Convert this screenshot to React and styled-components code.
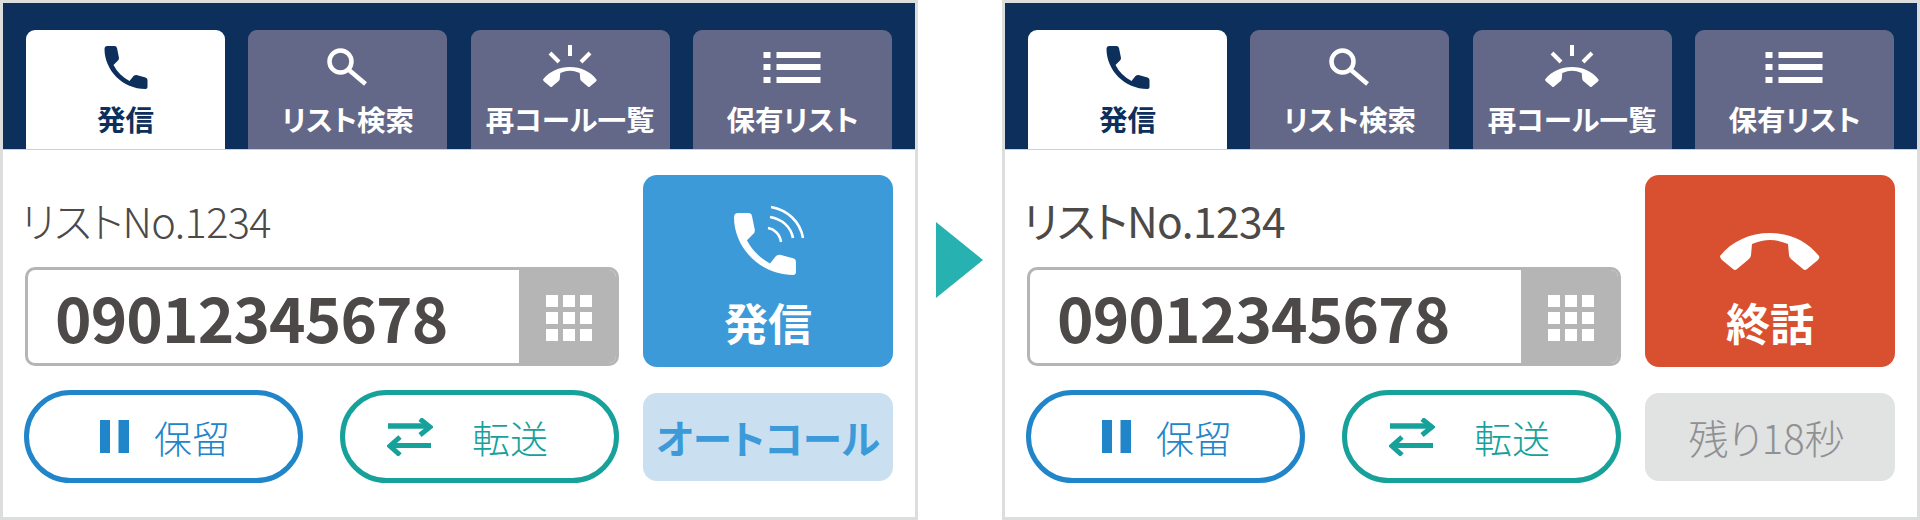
import React from "react";
import styled, { createGlobalStyle } from "styled-components";

const Global = createGlobalStyle`
  html, body { margin: 0; padding: 0; background: #fff; }
  body { font-family: "Noto Sans CJK JP", "Noto Sans", sans-serif; font-feature-settings: "palt"; }
`;

const Page = styled.div`
  width: 1920px;
  height: 520px;
  display: grid;
  grid-template-columns: 918px 84px 918px;
  overflow: hidden;
`;

const Panel = styled.section`
  box-sizing: border-box;
  height: 520px;
  border: 3px solid #dcdddd;
  background: #fff;
`;

const TabBar = styled.nav`
  box-sizing: border-box;
  height: 147px;
  padding: 27px 23px 0;
  display: grid;
  grid-template-columns: repeat(4, 199px);
  column-gap: 23.33px;
  background: #0d2f5c;
  border-bottom: 1px solid #c9d0da;
`;

const Tab = styled.div`
  height: 119px;
  box-sizing: border-box;
  padding-top: 14px;
  border-radius: 9px 9px 0 0;
  display: flex;
  flex-direction: column;
  align-items: center;
  background: ${(p) => (p.$active ? "#fff" : "#646888")};
  color: ${(p) => (p.$active ? "#0d2f5c" : "#fff")};
`;

const TabIcon = styled.svg`
  display: block;
  width: 60px;
  height: 48px;
  fill: currentColor;
  stroke: none;
`;

const TabLabel = styled.span`
  margin-top: 7px;
  font-size: 28.5px;
  line-height: 40px;
  font-weight: 700;
  white-space: nowrap;
`;

const Body = styled.div`
  display: grid;
  grid-template-columns: 595px 250px;
  grid-template-rows: 192px 93px;
  column-gap: 24px;
  row-gap: 23px;
  padding: 25px 0 0 21px;
`;

const Entry = styled.div`
  display: flex;
  flex-direction: column;
  justify-content: flex-end;
  padding-bottom: 1px;
`;

const ListLabel = styled.div`
  margin: 0 0 23px -3px;
  font-size: ${(p) => p.$size}px;
  line-height: 48px;
  font-weight: ${(p) => p.$weight};
  color: #4c4948;
  letter-spacing: -0.6px;
`;

const NumberField = styled.div`
  box-sizing: border-box;
  margin-left: 1px;
  height: 99px;
  display: flex;
  border: 3px solid #b5b5b6;
  border-radius: 10px;
  overflow: hidden;
`;

const NumberText = styled.div`
  flex: 1;
  padding-left: 27px;
  font-size: 62px;
  line-height: 92px;
  font-weight: 700;
  color: #4c4948;
  letter-spacing: -0.9px;
`;

const Keypad = styled.div`
  width: 97px;
  box-sizing: border-box;
  padding: 2px 0 0 3px;
  background: #b5b5b6;
  display: flex;
  align-items: center;
  justify-content: center;
`;

const KeyGrid = styled.div`
  display: grid;
  grid-template-columns: repeat(3, 12px);
  grid-auto-rows: 12px;
  gap: 5px;
`;

const Key = styled.span`
  background: #fff;
`;

const CallButton = styled.div`
  border-radius: 14px;
  background: ${(p) => p.$color};
  color: #fff;
  display: flex;
  flex-direction: column;
  align-items: center;
  padding-top: 27px;
  box-sizing: border-box;
`;

const CallLabel = styled.span`
  font-size: 44px;
  line-height: 60px;
  font-weight: 700;
`;

const CallIcon = styled.svg`
  display: block;
  width: 110px;
  height: 76px;
  fill: currentColor;
  margin-bottom: 14px;
`;

const PillRow = styled.div`
  display: grid;
  grid-template-columns: 279px 279px;
  column-gap: 37px;
`;

const Pill = styled.div`
  box-sizing: border-box;
  height: 93px;
  border: 5px solid ${(p) => p.$color};
  border-radius: 47px;
  color: ${(p) => p.$color};
  display: flex;
  align-items: center;
  padding-left: ${(p) => p.$pad}px;
  gap: ${(p) => p.$gap}px;
`;

const PillText = styled.span`
  font-size: 38px;
  line-height: 48px;
  font-weight: 300;
`;

const PillIcon = styled.svg`
  display: block;
  flex: none;
  fill: currentColor;
`;

const SubButton = styled.div`
  align-self: center;
  height: 88px;
  box-sizing: border-box;
  padding-right: ${(p) => p.$shift}px;
  border-radius: 14px;
  display: flex;
  align-items: center;
  justify-content: center;
  background: ${(p) => p.$bg};
  color: ${(p) => p.$color};
  font-size: ${(p) => p.$size}px;
  font-weight: ${(p) => p.$weight};
  white-space: nowrap;
`;

const ArrowCell = styled.div`
  display: flex;
  align-items: flex-start;
  padding: 222px 0 0 18px;
`;

const Arrow = styled.div`
  width: 0;
  height: 0;
  border-style: solid;
  border-width: 38px 0 38px 47px;
  border-color: transparent transparent transparent #27b1b1;
`;

const HANDSET =
  "M0 23C12 8 30 0 50 0S87 8 99 23Q100 25 98 27L87 36Q85 38 83 36L71 26Q69 24 69 22L68 11Q58 7 50 7T32 11L31 22Q31 24 29 26L17 36Q15 38 13 36L2 27Q0 25 0 23Z";
const PHONE =
  "M0 3Q0 0 3 0H10Q12 0 12.5 2L14.5 12Q14.5 14 13 15L9 19Q14 29 25 35L29 30Q30 29 32 29L41 31.5Q43 32 43 34V41Q43 43 41 43C18 43 0 24 0 3Z";

const tabIcons = {
  phone: <path transform="translate(8.5 2)" d={PHONE} />,
  search: (
    <g fill="none" stroke="currentColor" strokeWidth="4.500">
      <circle cx="22.500" cy="17.500" r="11" />
      <path d="M31 26L47.500 40" />
    </g>
  ),
  recall: (
    <>
      <path transform="translate(3 23) scale(.54)" d={HANDSET} />
      <path d="M30 1V12M10 9L19 18M50 9L41 18" fill="none" stroke="currentColor" strokeWidth="4" />
    </>
  ),
  list: (
    <path d="M1.500 8h7v6h-7zM14.500 8h44v6h-44zM1.500 20h7v6h-7zM14.500 20h44v6h-44zM1.500 33h7v6h-7zM14.500 33h44v6h-44z" />
  ),
};

const tabs = [
  { key: "phone", label: "発信", active: true },
  { key: "search", label: "リスト検索" },
  { key: "recall", label: "再コール一覧" },
  { key: "list", label: "保有リスト" },
];

const Dial = () => (
  <CallIcon viewBox="0 0 110 76">
    <path transform="translate(21 11) scale(1.44)" d={PHONE} />
    <g fill="none" stroke="currentColor" strokeWidth="2.600">
      <path d="M55 26C61 27 67 32 68 40" />
      <path d="M57 15C69 17 78 25 80 36" />
      <path d="M58 5C74 8 87 19 90 36" />
    </g>
  </CallIcon>
);

const HangUp = () => (
  <CallIcon viewBox="0 0 110 76">
    <path transform="translate(5 31)" d={HANDSET} />
  </CallIcon>
);

const PhonePanel = ({ action, sub, label }) => (
  <Panel>
    <TabBar>
      {tabs.map((t) => (
        <Tab key={t.key} $active={t.active}>
          <TabIcon viewBox="0 0 60 48">{tabIcons[t.key]}</TabIcon>
          <TabLabel>{t.label}</TabLabel>
        </Tab>
      ))}
    </TabBar>
    <Body>
      <Entry>
        <ListLabel $size={label.size} $weight={label.weight}>
          リストNo.1234
        </ListLabel>
        <NumberField>
          <NumberText>09012345678</NumberText>
          <Keypad>
            <KeyGrid>
              {Array.from({ length: 9 }, (_, i) => (
                <Key key={i} />
              ))}
            </KeyGrid>
          </Keypad>
        </NumberField>
      </Entry>
      <CallButton $color={action.color}>
        {action.icon}
        <CallLabel>{action.label}</CallLabel>
      </CallButton>
      <PillRow>
        <Pill $color="#2186c9" $pad={71} $gap={25}>
          <PillIcon width="29" height="33" viewBox="0 0 29 33">
            <path d="M0 0h10v33H0zM18.500 0h10.500v33H18.500z" />
          </PillIcon>
          <PillText>保留</PillText>
        </Pill>
        <Pill $color="#16a29a" $pad={42} $gap={39}>
          <PillIcon width="46" height="38" viewBox="0 0 46 38">
            <path d="M1 8h38" fill="none" stroke="currentColor" strokeWidth="5.500" />
            <path d="M33 1l10 8-10 8M13 19L3 28l10 9" fill="none" stroke="currentColor" strokeWidth="5" />
            <path d="M5 27.500h39" fill="none" stroke="currentColor" strokeWidth="5" />
          </PillIcon>
          <PillText>転送</PillText>
        </Pill>
      </PillRow>
      <SubButton $bg={sub.bg} $color={sub.color} $size={sub.size} $weight={sub.weight} $shift={sub.shift}>
        {sub.label}
      </SubButton>
    </Body>
  </Panel>
);

export default function App() {
  return (
    <Page>
      <Global />
      <PhonePanel
        label={{ size: 41.5, weight: 300 }}
        action={{ color: "#3d9ad9", label: "発信", icon: <Dial /> }}
        sub={{ bg: "#cae0f1", color: "#3d9ad9", size: 39.5, weight: 700, shift: 0, label: "オートコール" }}
      />
      <ArrowCell>
        <Arrow />
      </ArrowCell>
      <PhonePanel
        label={{ size: 42.5, weight: 400 }}
        action={{ color: "#d95030", label: "終話", icon: <HangUp /> }}
        sub={{ bg: "#e1e2e2", color: "#8f9192", size: 40, weight: 300, shift: 7, label: "残り18秒" }}
      />
    </Page>
  );
}
